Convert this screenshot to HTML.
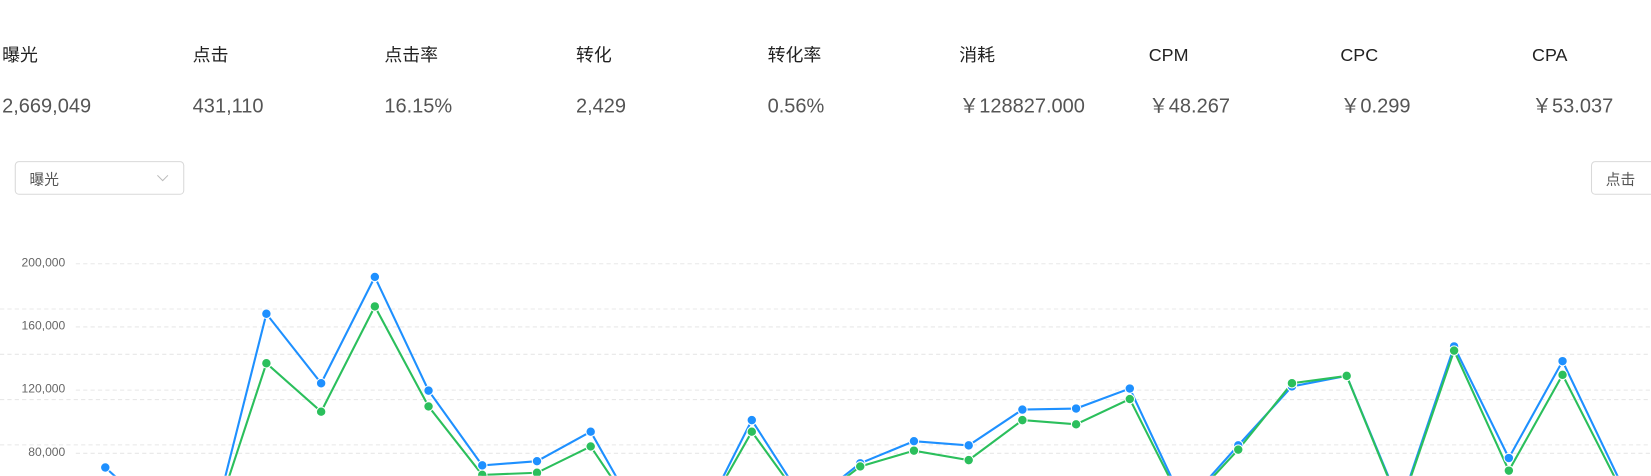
<!DOCTYPE html>
<html><head><meta charset="utf-8"><style>
html,body{margin:0;padding:0;background:#fff;overflow:hidden;width:1651px;height:476px}
#w{position:absolute;left:0;top:0;width:1568px;height:452px;overflow:hidden;transform:scale(1.05293);transform-origin:0 0;font-family:"Liberation Sans","Noto Sans CJK SC",sans-serif}
.h{position:absolute;top:41px;font-size:17px;color:#222;line-height:24px;height:24px}
.v{position:absolute;top:90px;font-size:19px;color:#555;line-height:24px;height:24px}
.box{position:absolute;border:1px solid #d9d9d9;border-radius:4px;height:32px;font-size:14px;color:#555;line-height:32px;box-sizing:border-box}
.ax{position:absolute;font-size:11.5px;color:#666;right:1506px;text-align:right;line-height:14px}
</style></head><body><div id="w">
<div class="h" style="left:2px">曝光</div><div class="v" style="left:2px">2,669,049</div>
<div class="h" style="left:183px">点击</div><div class="v" style="left:183px">431,110</div>
<div class="h" style="left:365px">点击率</div><div class="v" style="left:365px">16.15%</div>
<div class="h" style="left:547px">转化</div><div class="v" style="left:547px">2,429</div>
<div class="h" style="left:729px">转化率</div><div class="v" style="left:729px">0.56%</div>
<div class="h" style="left:911px">消耗</div><div class="v" style="left:911px">￥128827.000</div>
<div class="h" style="left:1091px">CPM</div><div class="v" style="left:1091px">￥48.267</div>
<div class="h" style="left:1273px">CPC</div><div class="v" style="left:1273px">￥0.299</div>
<div class="h" style="left:1455px">CPA</div><div class="v" style="left:1455px">￥53.037</div>
<div class="box" style="left:14px;top:153px;width:161px;padding-left:13px">曝光<svg style="position:absolute;right:14px;top:12px" width="11" height="7" viewBox="0 0 11 7"><path d="M0.5 0.5L5.5 5.5L10.5 0.5" fill="none" stroke="#bbb" stroke-width="1"/></svg></div>
<div class="box" style="left:1511px;top:153px;width:80px;padding-left:13px">点击</div>
<div class="ax" style="top:243px">200,000</div>
<div class="ax" style="top:303px">160,000</div>
<div class="ax" style="top:363px">120,000</div>
<div class="ax" style="top:423px">80,000</div>
<svg style="position:absolute;left:0;top:0" width="1568" height="452" viewBox="0 0 1568 452">
<g stroke="#e8e8e8" stroke-dasharray="4 3" stroke-width="1">
<path d="M72 250.5H1568M72 310.5H1568M72 370.5H1568M72 430.5H1568M0 293.5H1568M0 336.5H1568M0 379.5H1568M0 422.5H1568"/>
</g>
<polyline fill="none" stroke="#1e90ff" stroke-width="2" points="100,444 151,490 202,500 253,298 305,364 356,263 407,371 458,442 510,438 561,410 612,500 663,500 714,399 766,480 817,440 868,419 920,423 971,389 1022,388 1073,369 1125,480 1176,423 1227,367 1279,357 1330,480 1381,329 1433,435 1484,343 1540,460"/>
<polyline fill="none" stroke="#2bbf5c" stroke-width="2" points="151,500 202,500 253,345 305,391 356,291 407,386 458,451 510,449 561,424 612,500 663,500 714,410 766,482 817,443 868,428 920,437 971,399 1022,403 1073,379 1125,482 1176,427 1227,364 1279,357 1330,482 1381,333 1433,447 1484,356 1538,462"/>
<g fill="#1e90ff" stroke="#fff" stroke-width="1">
<circle cx="100" cy="444" r="4.5"/><circle cx="253" cy="298" r="4.5"/><circle cx="305" cy="364" r="4.5"/><circle cx="356" cy="263" r="4.5"/><circle cx="407" cy="371" r="4.5"/><circle cx="458" cy="442" r="4.5"/><circle cx="510" cy="438" r="4.5"/><circle cx="561" cy="410" r="4.5"/><circle cx="714" cy="399" r="4.5"/><circle cx="817" cy="440" r="4.5"/><circle cx="868" cy="419" r="4.5"/><circle cx="920" cy="423" r="4.5"/><circle cx="971" cy="389" r="4.5"/><circle cx="1022" cy="388" r="4.5"/><circle cx="1073" cy="369" r="4.5"/><circle cx="1176" cy="423" r="4.5"/><circle cx="1227" cy="367" r="4.5"/><circle cx="1381" cy="329" r="4.5"/><circle cx="1433" cy="435" r="4.5"/><circle cx="1484" cy="343" r="4.5"/>
</g>
<g fill="#2bbf5c" stroke="#fff" stroke-width="1">
<circle cx="253" cy="345" r="4.5"/><circle cx="305" cy="391" r="4.5"/><circle cx="356" cy="291" r="4.5"/><circle cx="407" cy="386" r="4.5"/><circle cx="458" cy="451" r="4.5"/><circle cx="510" cy="449" r="4.5"/><circle cx="561" cy="424" r="4.5"/><circle cx="714" cy="410" r="4.5"/><circle cx="817" cy="443" r="4.5"/><circle cx="868" cy="428" r="4.5"/><circle cx="920" cy="437" r="4.5"/><circle cx="971" cy="399" r="4.5"/><circle cx="1022" cy="403" r="4.5"/><circle cx="1073" cy="379" r="4.5"/><circle cx="1176" cy="427" r="4.5"/><circle cx="1227" cy="364" r="4.5"/><circle cx="1279" cy="357" r="4.5"/><circle cx="1381" cy="333" r="4.5"/><circle cx="1433" cy="447" r="4.5"/><circle cx="1484" cy="356" r="4.5"/>
</g>
</svg>
</div></body></html>
